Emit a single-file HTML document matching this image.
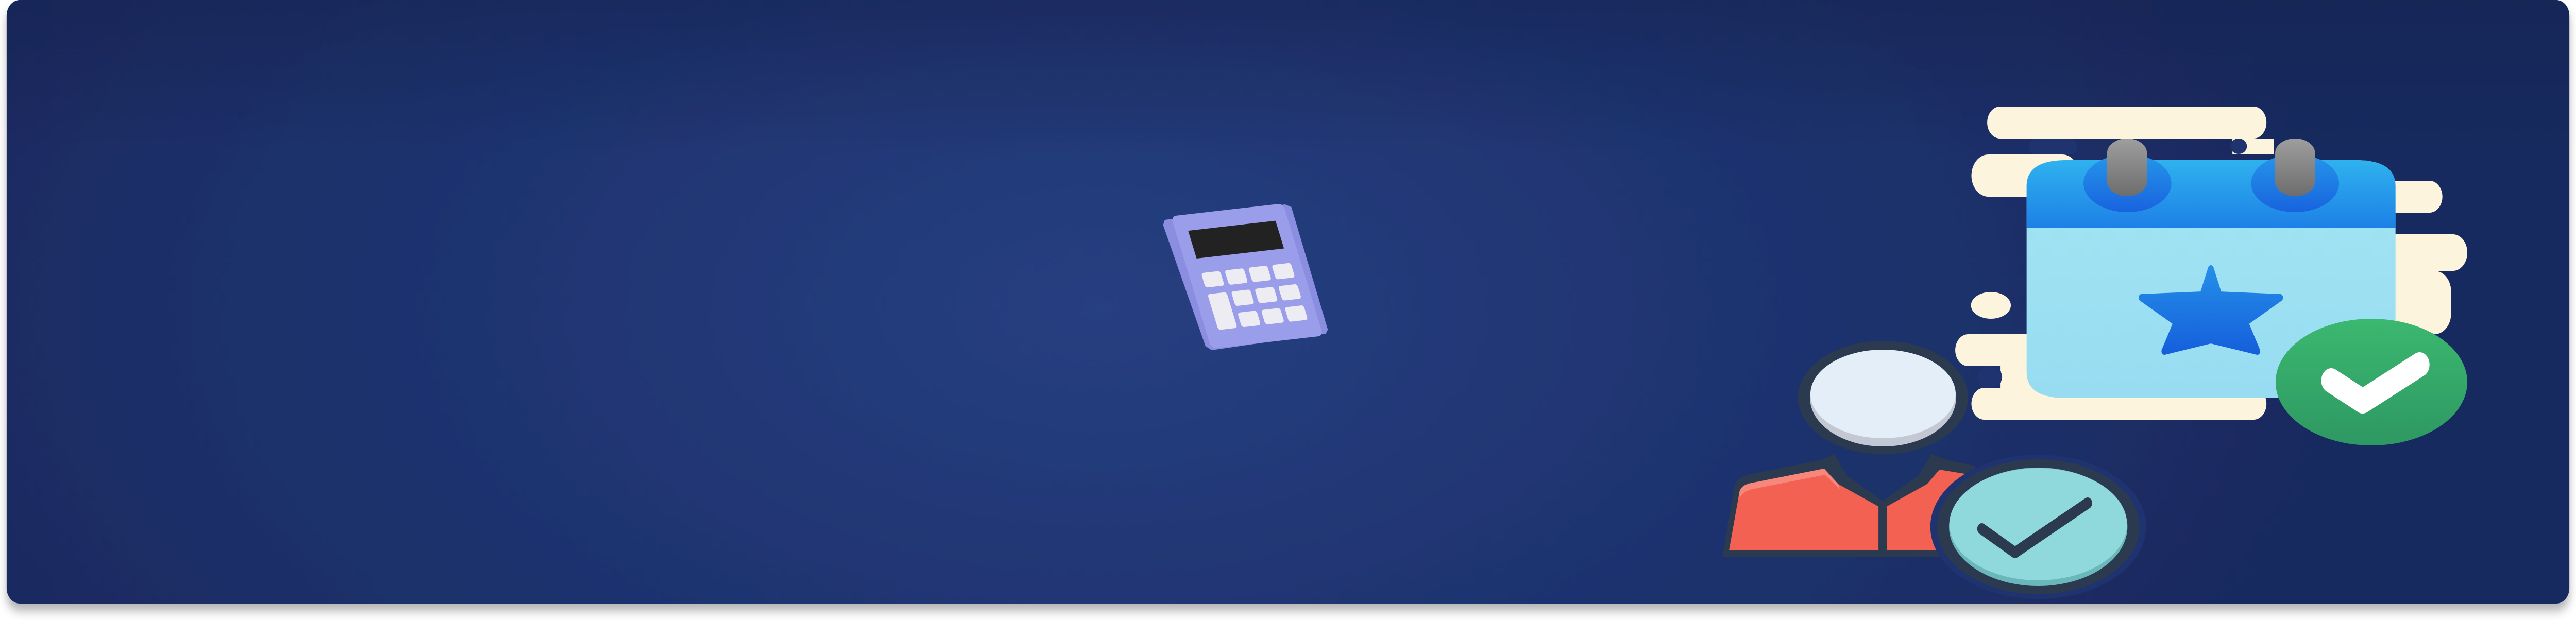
<!DOCTYPE html>
<html><head><meta charset="utf-8"><style>
html,body{margin:0;padding:0;background:#fff;width:100%;height:100%;overflow:hidden}
svg{display:block;position:fixed;left:0;top:0;width:100vw;height:100vh}
</style></head><body>
<svg viewBox="0 0 6208 1204" preserveAspectRatio="none" xmlns="http://www.w3.org/2000/svg">
<defs>
<radialGradient id="bg" cx="2650" cy="600" r="3000" gradientUnits="userSpaceOnUse" gradientTransform="translate(2650 600) scale(1 0.45) translate(-2650 -600)">
<stop offset="0" stop-color="#263f80"/><stop offset="0.5" stop-color="#1f3471"/><stop offset="1" stop-color="#192a5f"/>
</radialGradient>
<linearGradient id="top" x1="0" y1="0" x2="0" y2="1"><stop offset="0" stop-color="#15224f" stop-opacity="0.5"/><stop offset="1" stop-color="#15224f" stop-opacity="0"/></linearGradient>
<linearGradient id="hdr" x1="0" y1="0" x2="0" y2="1"><stop offset="0" stop-color="#2fb2ee"/><stop offset="1" stop-color="#1d80e6"/></linearGradient>
<linearGradient id="ring" x1="0" y1="0" x2="0" y2="1"><stop offset="0" stop-color="#2596ea"/><stop offset="1" stop-color="#1863de"/></linearGradient>
<linearGradient id="post" x1="0" y1="0" x2="0" y2="1"><stop offset="0" stop-color="#9e9e9e"/><stop offset="1" stop-color="#6d6d6d"/></linearGradient>
<linearGradient id="body" x1="0" y1="0" x2="0" y2="1"><stop offset="0" stop-color="#a1e5f3"/><stop offset="1" stop-color="#98dcf2"/></linearGradient>
<linearGradient id="star" x1="0" y1="0" x2="0" y2="1"><stop offset="0" stop-color="#248ee8"/><stop offset="1" stop-color="#1660dc"/></linearGradient>
<linearGradient id="grn" x1="0" y1="0" x2="0" y2="1"><stop offset="0" stop-color="#3bb870"/><stop offset="1" stop-color="#2e9862"/></linearGradient>
<filter id="sh" x="-5%" y="-5%" width="110%" height="115%"><feDropShadow dx="0" dy="14" stdDeviation="10" flood-color="#000" flood-opacity="0.3"/></filter>
</defs>
<rect x="16" y="0" width="6176" height="1172" rx="32" ry="30" fill="url(#bg)" filter="url(#sh)"/>
<rect x="16" y="0" width="6176" height="300" rx="32" fill="url(#top)"/>

<!-- calculator -->
<polygon points="2807,427 3097,397 3112,402 3200,640 3195,648 2920,680 2905,672 2803,437" fill="#8a8de0"/>
<g transform="matrix(270,-25,97,257,2822,420)">
<path d="M0.05,0 L0.95,0 Q1,0 1,0.05 L1,0.95 Q1,1 0.95,1 L0.05,1 Q0,1 0,0.95 L0,0.05 Q0,0 0.05,0Z" fill="#9a9de9"/>
<rect x="0.11" y="0.12" width="0.78" height="0.21" fill="#222"/>
<g fill="#ececf2">
<rect x="0.11" y="0.44" width="0.17" height="0.11" rx="0.02"/>
<rect x="0.32" y="0.44" width="0.17" height="0.11" rx="0.02"/>
<rect x="0.53" y="0.44" width="0.17" height="0.11" rx="0.02"/>
<rect x="0.74" y="0.44" width="0.17" height="0.11" rx="0.02"/>
<rect x="0.11" y="0.6" width="0.17" height="0.27" rx="0.02"/>
<rect x="0.32" y="0.6" width="0.17" height="0.11" rx="0.02"/>
<rect x="0.53" y="0.6" width="0.17" height="0.11" rx="0.02"/>
<rect x="0.74" y="0.6" width="0.17" height="0.11" rx="0.02"/>
<rect x="0.32" y="0.76" width="0.17" height="0.11" rx="0.02"/>
<rect x="0.53" y="0.76" width="0.17" height="0.11" rx="0.02"/>
<rect x="0.74" y="0.76" width="0.17" height="0.11" rx="0.02"/>
</g>
</g>

<!-- cream cloud -->
<g fill="#fdf4de">
<rect x="4789" y="207" width="673" height="62" rx="31"/>
<rect x="4751" y="300" width="260" height="82" rx="41"/>
<rect x="5380" y="269" width="100" height="31" />
<rect x="5700" y="351" width="186" height="62" rx="31"/>
<rect x="5740" y="455" width="206" height="71" rx="35"/>
<rect x="5740" y="526" width="167" height="123" rx="40"/>
<ellipse cx="4798" cy="593" rx="48" ry="26"/>
<rect x="4712" y="649" width="250" height="62" rx="31"/>
<rect x="4751" y="753" width="711" height="62" rx="31"/>
<rect x="4820" y="711" width="140" height="42"/>
</g>
<g fill="#1e3370">
<rect x="4890" y="269" width="115" height="31" rx="15"/>
<ellipse cx="5395" cy="284" rx="20" ry="15"/>
<ellipse cx="4795" cy="732" rx="30" ry="21"/>
</g>

<!-- calendar -->
<path d="M4980,311 L5677,311 Q5773,311 5773,361 L5773,773 L4980,773 Q4884,773 4884,723 L4884,361 Q4884,311 4980,311Z" fill="url(#body)"/>
<path d="M4980,311 L5677,311 Q5773,311 5773,361 L5773,443 L4884,443 L4884,361 Q4884,311 4980,311Z" fill="url(#hdr)"/>
<ellipse cx="5127" cy="356" rx="106" ry="56" fill="url(#ring)"/>
<ellipse cx="5531" cy="356" rx="106" ry="56" fill="url(#ring)"/>
<rect x="5078" y="269" width="96" height="112" rx="48" ry="28" fill="url(#post)"/>
<rect x="5483" y="269" width="96" height="112" rx="48" ry="28" fill="url(#post)"/>
<path d="M5328,522 L5348,573 L5495,578 L5411,626 L5440,682 L5328,660 L5216,682 L5245,626 L5161,578 L5308,573Z" fill="url(#star)" stroke="url(#star)" stroke-width="14" stroke-linejoin="round"/>

<!-- green check -->
<ellipse cx="5715" cy="742" rx="231" ry="123" fill="url(#grn)"/>
<polyline points="5618,739 5694,779 5831,708" fill="none" stroke="#fff" stroke-width="48" stroke-linecap="round" stroke-linejoin="round"/>

<!-- person -->
<path d="M4212,922 L4390,893 L4420,882 L4450,923 L4537,973 L4624,923 L4655,882 L4690,893 L4760,905 L4730,1081 L4151,1081 L4180,945 Q4185,928 4212,922Z" fill="#2c3a50"/>
<path d="M4220,938 L4396,910 L4430,940 L4537,988 L4644,940 L4674,912 L4735,920 L4712,1068 L4167,1068 L4192,955 Q4196,942 4220,938Z" fill="#f26152"/>
<path d="M4220,938 L4396,910 L4430,940 L4434,950 L4398,922 L4222,950 Q4198,955 4192,968 L4192,955 Q4196,942 4220,938Z" fill="#f7877a"/>
<rect x="4527" y="975" width="20" height="106" fill="#2c3a50"/>
<ellipse cx="4538" cy="772" rx="205" ry="110" fill="#2c3a50"/>
<ellipse cx="4538" cy="773" rx="176" ry="94" fill="#c3c8d2"/>
<ellipse cx="4538" cy="765" rx="175" ry="86" fill="#e4eef8"/>

<!-- teal check -->
<ellipse cx="4912" cy="1023" rx="260" ry="140" fill="#1e3370"/>
<ellipse cx="4912" cy="1023" rx="244" ry="131" fill="#2c3a50"/>
<ellipse cx="4912" cy="1023" rx="215" ry="115" fill="#6ab8b9"/>
<ellipse cx="4912" cy="1018" rx="214" ry="109" fill="#8fd8dc"/>
<polyline points="4776,1027 4856,1073 5031,977" fill="none" stroke="#2c3a50" stroke-width="22" stroke-linecap="round" stroke-linejoin="round"/>
</svg>
</body></html>
